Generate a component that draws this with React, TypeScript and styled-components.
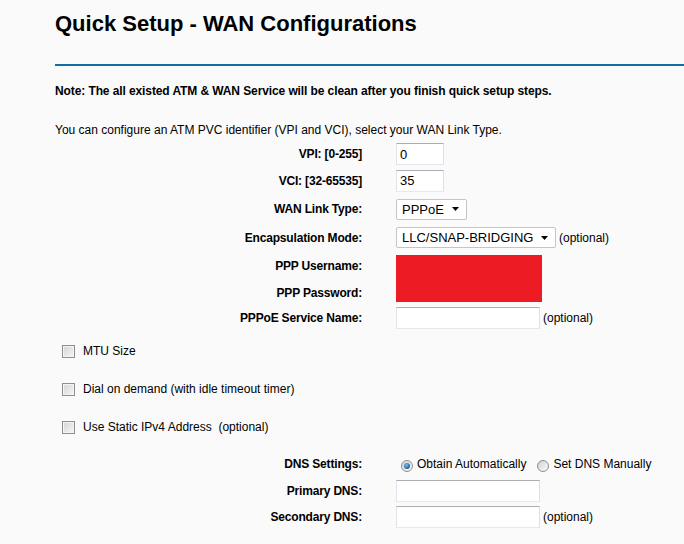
import React from "react";
import styled, { createGlobalStyle } from "styled-components";

const GlobalStyle = createGlobalStyle`
  html, body {
    margin: 0;
    background: #fafafa;
  }
  body {
    font-family: "Liberation Sans", Arial, sans-serif;
    font-size: 12px;
    color: #000;
  }
`;

const Page = styled.div`
  width: 684px;
  height: 544px;
  overflow: hidden;
  padding-left: 55px;
  box-sizing: border-box;
`;

const Title = styled.h1`
  margin: 11px 0 0;
  font-size: 22px;
  line-height: 26px;
  font-weight: bold;
`;

const Rule = styled.div`
  margin-top: 27px;
  height: 2px;
  background: #0f6ea6;
`;

const Text = styled.p<{ $bold?: boolean; $top: number }>`
  margin: ${(p) => p.$top}px 0 0;
  line-height: 14px;
  font-weight: ${(p) => (p.$bold ? "bold" : "normal")};
  letter-spacing: ${(p) => (p.$bold ? "-0.1px" : "0")};
`;

const FormGrid = styled.div<{ $rows: string; $top: number }>`
  display: grid;
  grid-template-columns: 307px auto;
  grid-template-rows: ${(p) => p.$rows};
  column-gap: 34px;
  align-items: center;
  margin-top: ${(p) => p.$top}px;
`;

const Label = styled.div`
  text-align: right;
  font-weight: bold;
  letter-spacing: -0.18px;
  white-space: nowrap;
`;

const Field = styled.div`
  display: flex;
  align-items: center;
  gap: 3px;
  white-space: nowrap;
`;

const TextInput = styled.input<{ $w: number }>`
  width: ${(p) => p.$w}px;
  height: 22px;
  box-sizing: border-box;
  margin: 0;
  padding: 0 3px;
  border: 1px solid;
  border-color: #abadb3 #dbdfe6 #e3e9ef #e2e3ea;
  background: #fff;
  font-family: inherit;
  font-size: 13px;
  color: #000;
  outline: none;
`;

const SelectBox = styled.div<{ $w: number }>`
  width: ${(p) => p.$w}px;
  height: 21px;
  box-sizing: border-box;
  display: flex;
  align-items: center;
  justify-content: space-between;
  padding: 0 7px 0 5px;
  border: 1px solid #c5c5c5;
  border-radius: 2px;
  background: #fff;
  font-size: 13px;
`;

const Hidden = styled.div`
  grid-row: span 2;
  align-self: stretch;
  width: 146px;
  margin: 4px 0 3px;
  background: #ed1c24;
`;

const CheckList = styled.div`
  margin-top: 2px;
`;

const CheckRow = styled.label`
  display: flex;
  align-items: center;
  height: 38px;
  gap: 8px;
  padding-left: 7px;
`;

const Check = styled.span`
  width: 13px;
  height: 13px;
  box-sizing: border-box;
  border: 1px solid #8f8f8f;
  box-shadow: inset 0 0 0 1px #f4f4f4;
  background: linear-gradient(135deg, #d4d4d4, #f6f6f6);
`;

const RadioGroup = styled.div`
  display: flex;
  align-items: center;
  padding-left: 5px;
`;

const Radio = styled.span<{ $on?: boolean }>`
  position: relative;
  width: 12px;
  height: 12px;
  box-sizing: border-box;
  margin: 5px 4px 0 0;
  border: 1px solid #8e8f8f;
  border-radius: 50%;
  background: linear-gradient(135deg, #d2d2d2, #fbfbfb);

  &::after {
    content: "";
    display: ${(p) => (p.$on ? "block" : "none")};
    position: absolute;
    left: 2px;
    top: 2px;
    width: 6px;
    height: 6px;
    border-radius: 50%;
    background: radial-gradient(circle at 40% 35%, #7cc0f0, #1d5f9c 70%);
  }
`;

const RadioText = styled.span<{ $gap?: number }>`
  margin-right: ${(p) => p.$gap ?? 0}px;
`;

function Caret() {
  return (
    <svg width="7" height="4" viewBox="0 0 7 4">
      <path d="M0 0h7L3.5 4z" fill="#000" />
    </svg>
  );
}

const checks = ["MTU Size", "Dial on demand (with idle timeout timer)", "Use Static IPv4 Address\u00a0 (optional)"];

export default function App() {
  return (
    <>
      <GlobalStyle />
      <Page>
        <Title>Quick Setup - WAN Configurations</Title>
        <Rule />
        <Text $bold $top={18}>
          Note: The all existed ATM &amp; WAN Service will be clean after you finish quick setup steps.
        </Text>
        <Text $top={25}>
          You can configure an ATM PVC identifier (VPI and VCI), select your WAN Link Type.
        </Text>

        <FormGrid $top={4} $rows="26px 27px 30px 27px 29px 25px 25px">
          <Label>VPI: [0-255]</Label>
          <Field>
            <TextInput $w={48} defaultValue="0" />
          </Field>
          <Label>VCI: [32-65535]</Label>
          <Field>
            <TextInput $w={48} defaultValue="35" />
          </Field>
          <Label>WAN Link Type:</Label>
          <Field>
            <SelectBox $w={71}>
              PPPoE <Caret />
            </SelectBox>
          </Field>
          <Label>Encapsulation Mode:</Label>
          <Field>
            <SelectBox $w={160}>
              LLC/SNAP-BRIDGING <Caret />
            </SelectBox>
            (optional)
          </Field>
          <Label>PPP Username:</Label>
          <Hidden />
          <Label>PPP Password:</Label>
          <Label>PPPoE Service Name:</Label>
          <Field>
            <TextInput $w={144} />
            (optional)
          </Field>
        </FormGrid>

        <CheckList>
          {checks.map((c) => (
            <CheckRow key={c}>
              <Check />
              {c}
            </CheckRow>
          ))}
        </CheckList>

        <FormGrid $top={4} $rows="27px 27px 25px">
          <Label>DNS Settings:</Label>
          <RadioGroup>
            <Radio $on />
            <RadioText $gap={11}>Obtain Automatically</RadioText>
            <Radio />
            <RadioText>Set DNS Manually</RadioText>
          </RadioGroup>
          <Label>Primary DNS:</Label>
          <Field>
            <TextInput $w={144} />
          </Field>
          <Label>Secondary DNS:</Label>
          <Field>
            <TextInput $w={144} />
            (optional)
          </Field>
        </FormGrid>
      </Page>
    </>
  );
}
